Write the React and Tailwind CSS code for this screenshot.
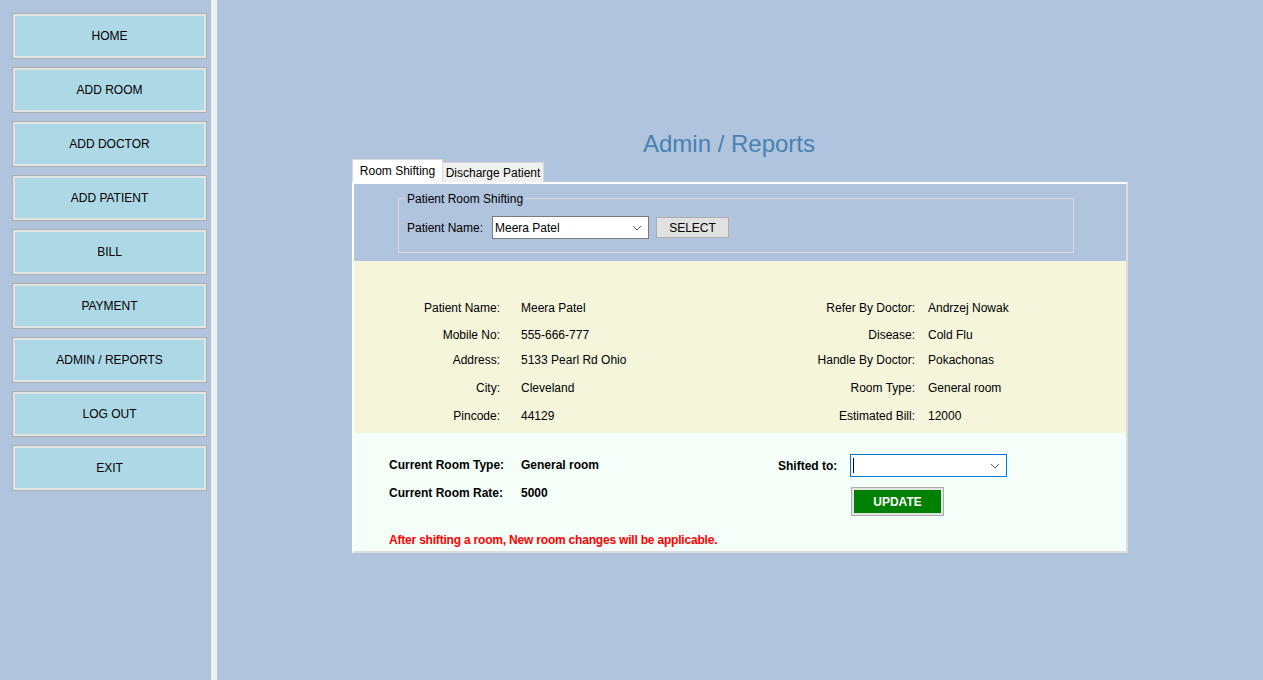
import React from "react";

const menu = ["HOME", "ADD ROOM", "ADD DOCTOR", "ADD PATIENT", "BILL", "PAYMENT", "ADMIN / REPORTS", "LOG OUT", "EXIT"];

const details = [
  ["Patient Name:", "Meera Patel", "Refer By Doctor:", "Andrzej Nowak", "h-[27px]"],
  ["Mobile No:", "555-666-777", "Disease:", "Cold Flu", "h-[25px]"],
  ["Address:", "5133 Pearl Rd Ohio", "Handle By Doctor:", "Pokachonas", "h-[28px]"],
  ["City:", "Cleveland", "Room Type:", "General room", "h-[28px]"],
  ["Pincode:", "44129", "Estimated Bill:", "12000", "h-[16px]"],
];

function Chevron() {
  return (
    <svg width="10" height="6" viewBox="0 0 10 6" className="shrink-0">
      <polyline points="1,1 5,5 9,1" fill="none" stroke="#606060" strokeWidth="1" />
    </svg>
  );
}

function SideButton({ label }) {
  // winforms style button: gray edge, light inner bevel, lightblue face
  return (
    <div className="h-[46px] w-[195px] border border-[#adadad] bg-[#e3e3e3] p-[2px]">
      <div className="flex h-full items-center justify-center bg-[#add8e6] text-[12px] text-black">{label}</div>
    </div>
  );
}

export default function App() {
  return (
    <div className="flex h-[680px] w-[1263px] overflow-hidden bg-[#b0c4de] font-['Liberation_Sans',Arial,sans-serif] text-[12px] text-black">
      {/* sidebar */}
      <div className="flex w-[211px] shrink-0 flex-col gap-2 pl-3 pt-[13px]">
        {menu.map((m) => (
          <SideButton key={m} label={m} />
        ))}
      </div>
      <div className="w-[6px] shrink-0 bg-[#f0f0f0]" />

      {/* main */}
      <div className="flex flex-1 flex-col items-center pt-[128px]">
        <div className="mr-[22px] text-[24px] leading-8 text-[#4682b4]">Admin / Reports</div>

        <div className="w-[776px]">
          {/* tabs */}
          <div className="flex h-[22px] items-end">
            <div className="flex h-[23px] w-[91px] items-center justify-center border border-b-0 border-[#d9d9d9] bg-white">Room Shifting</div>
            <div className="flex h-[20px] w-[101px] items-center justify-center border border-b-0 border-l-0 border-[#d9d9d9] bg-[#f0f0f0]">Discharge Patient</div>
          </div>

          {/* tab page */}
          <div className="h-[371px] border-2 border-white border-r-[#dcdcdc] border-b-[#dcdcdc]">
            <div className="h-[77px] bg-[#b0c4de] pl-[44px] pt-[14px]">
              <div className="relative h-[55px] w-[676px] border border-[#dcdcdc] pl-2 pt-[17px]">
                <span className="absolute -top-[8px] left-[6px] bg-[#b0c4de] px-[2px] leading-4">Patient Room Shifting</span>
                <div className="flex items-center">
                  <span className="w-[85px]">Patient Name:</span>
                  <div className="flex h-[23px] w-[157px] items-center justify-between border border-[#7a7a7a] bg-white pl-[2px] pr-[6px]">
                    <span>Meera Patel</span>
                    <Chevron />
                  </div>
                  <div className="ml-[7px] flex h-[21px] w-[73px] items-center justify-center border border-[#adadad] bg-[#e1e1e1]">SELECT</div>
                </div>
              </div>
            </div>

            <div className="h-[172px] bg-[#f5f5dc] pt-[39px]">
              {details.map(([l1, v1, l2, v2, h]) => (
                <div key={l1} className={`flex leading-4 ${h}`}>
                  <div className="w-[146px] text-right">{l1}</div>
                  <div className="ml-[21px] w-[240px]">{v1}</div>
                  <div className="w-[154px] text-right">{l2}</div>
                  <div className="ml-[13px]">{v2}</div>
                </div>
              ))}
            </div>

            <div className="flex h-[118px] bg-[#f5fffa]">
              <div className="w-[424px] pl-[35px] pt-[24px] font-bold leading-4">
                <div className="flex">
                  <span className="w-[132px]">Current Room Type:</span>
                  <span>General room</span>
                </div>
                <div className="mt-3 flex">
                  <span className="w-[132px]">Current Room Rate:</span>
                  <span>5000</span>
                </div>
                <div className="mt-[31px] tracking-[-0.2px] text-[#ff0000]">After shifting a room, New room changes will be applicable.</div>
              </div>
              <div className="pt-[21px]">
                <div className="flex items-center">
                  <span className="w-[72px] font-bold">Shifted to:</span>
                  <div className="flex h-[23px] w-[157px] items-center justify-between border border-[#0078d7] bg-white pl-[2px] pr-[6px]">
                    <span className="h-[15px] w-px bg-black" />
                    <Chevron />
                  </div>
                </div>
                <div className="ml-[73px] mt-[10px] h-[29px] w-[93px] border border-[#adadad] bg-[#e3e3e3] p-[2px]">
                  <div className="flex h-full items-center justify-center bg-[#008000] font-bold text-white">UPDATE</div>
                </div>
              </div>
            </div>
          </div>
        </div>
      </div>
    </div>
  );
}
